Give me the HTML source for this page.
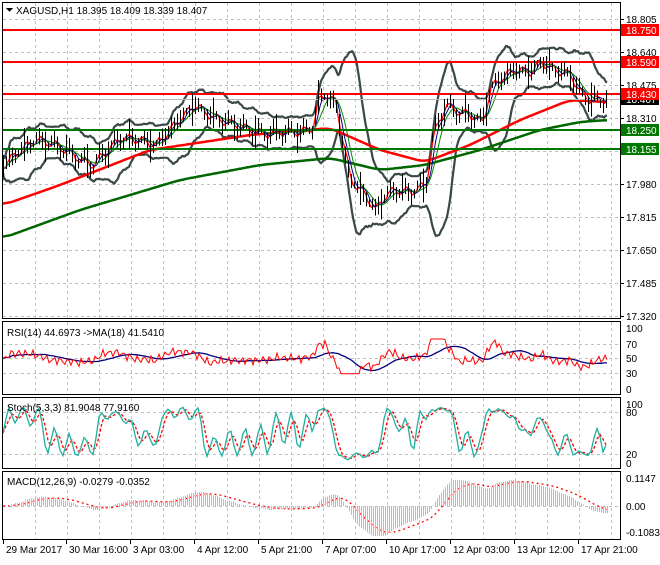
<!DOCTYPE html><html><head><meta charset="utf-8"><style>
body{margin:0;background:#fff;width:660px;height:560px;overflow:hidden;font-family:"Liberation Sans",sans-serif}
svg text{font-family:"Liberation Sans",sans-serif;font-size:10px}
</style></head><body>
<svg id="s" width="660" height="560" xmlns="http://www.w3.org/2000/svg" shape-rendering="crispEdges">
<rect width="660" height="560" fill="#fff"/>
<g id="grid" stroke="#c0c0c0" stroke-dasharray="3,3" stroke-width="1"></g>
<g id="main"></g>
<g fill="none" stroke="#000">
<rect x="2.5" y="2.5" width="618" height="316"/>
<rect x="2.5" y="321.5" width="618" height="73"/>
<rect x="2.5" y="397.5" width="618" height="71"/>
<rect x="2.5" y="471.5" width="618" height="68"/>
</g>
<g id="axis" fill="#000"></g>
<text x="16" y="14" font-size="10">XAGUSD,H1  18.395 18.409 18.339 18.407</text>
<path d="M6 8h7l-3.5 4z" fill="#000"/>
<text x="7" y="336">RSI(14) 44.6973  -&gt;MA(18) 41.5410</text>
<text x="7" y="411">Stoch(5,3,3) 81.9048 77.9160</text>
<text x="7" y="485">MACD(12,26,9) -0.0279 -0.0352</text>
</svg>
<script>
var S=document.getElementById('s'),G=document.getElementById('grid'),M=document.getElementById('main'),A=document.getElementById('axis');
function el(p,n,a,t){var e=document.createElementNS('http://www.w3.org/2000/svg',n);for(var k in a)e.setAttribute(k,a[k]);if(t)e.textContent=t;p.appendChild(e);return e;}
for(var x=35;x<620;x+=32)[[3,318],[322,394],[398,468],[472,539]].forEach(function(r){el(G,'line',{x1:x+.5,x2:x+.5,y1:r[0],y2:r[1]})});
for(var y=19;y<318;y+=33)el(G,'line',{x1:3,x2:620,y1:y+.5,y2:y+.5});
[344,358,373].forEach(function(y){el(G,'line',{x1:3,x2:620,y1:y+.5,y2:y+.5})});
[412,454].forEach(function(y){el(G,'line',{x1:3,x2:620,y1:y+.5,y2:y+.5})});
el(G,'line',{x1:3,x2:620,y1:506.5,y2:506.5});
var K=[[3,165],[20,150],[35,140],[50,143],[65,150],[80,160],[92,165],[105,152],[120,138],[140,140],[155,145],[165,135],[180,118],[195,105],[205,113],[220,120],[235,125],[250,130],[265,134],[280,132],[300,132],[312,128],[318,100],[325,95],[335,103],[342,140],[350,180],[362,192],[375,210],[385,195],[395,190],[410,192],[425,185],[433,135],[445,105],[458,112],[470,115],[482,122],[490,88],[505,75],[515,70],[530,72],[540,62],[555,70],[570,75],[580,93],[590,100],[607,99]];
var P=[];for(var x=3;x<=607;x++){for(var i=0;i<K.length-1&&K[i+1][0]<x;i++);var a=K[i],b=K[i+1]||a;var t=b[0]==a[0]?0:(x-a[0])/(b[0]-a[0]);P.push([x,a[1]+(b[1]-a[1])*t+Math.sin(x*1.7)*3+Math.sin(x*.43)*4]);}
function poly(p,pts,c,w,da){var s=pts.map(function(q){return q[0].toFixed(1)+','+q[1].toFixed(1)}).join(' ');var a={points:s,fill:'none',stroke:c,'stroke-width':w};if(da)a['stroke-dasharray']=da;el(p,'polyline',a);}
function sma(arr,n){return arr.map(function(v,i){var s=0,c=0;for(var j=Math.max(0,i-n+1);j<=i;j++){s+=arr[j];c++}return s/c})}
var pv=P.map(function(q){return q[1]});
var mid=sma(pv,26);var up=[],dn=[];
for(var i=0;i<pv.length;i++){var s=0,c=0;for(var j=Math.max(0,i-25);j<=i;j++){s+=(pv[j]-mid[i])*(pv[j]-mid[i]);c++}var d=Math.sqrt(s/c)*2.4+7;up.push([P[i][0],mid[i]-d]);dn.push([P[i][0],mid[i]+d]);}
var gs=document.createElementNS('http://www.w3.org/2000/svg','g');gs.setAttribute('shape-rendering','auto');M.appendChild(gs);
poly(gs,up,'#3a4848',2.2);poly(gs,dn,'#3a4848',2.2);
var R=[[3,205],[60,185],[150,150],[250,135],[330,128],[380,150],[425,162],[470,145],[520,120],[570,100],[607,102]];
var Gm=[[3,238],[80,210],[180,180],[260,165],[330,158],[380,170],[425,165],[480,150],[540,130],[580,122],[607,120]];
function interp(K){var o=[];for(var x=3;x<=607;x+=2){for(var i=0;i<K.length-1&&K[i+1][0]<x;i++);var a=K[i],b=K[i+1]||a;var t=b[0]==a[0]?0:(x-a[0])/(b[0]-a[0]);o.push([x,a[1]+(b[1]-a[1])*t]);}return o;}
function smooth(o){return o.map(function(q,i){var s=0,c=0;for(var j=Math.max(0,i-4);j<=Math.min(o.length-1,i+4);j++){s+=o[j][1];c++}return [q[0],s/c]})}
poly(gs,smooth(interp(R)),'#f00',2.5);poly(gs,smooth(interp(Gm)),'#060',2.5);
[[30,'#f00'],[62,'#f00'],[94,'#f00'],[130,'#070'],[149,'#070']].forEach(function(l){el(M,'line',{x1:3,x2:620,y1:l[0],y2:l[0],stroke:l[1],'stroke-width':2})});
el(M,'line',{x1:3,x2:620,y1:99.5,y2:99.5,stroke:'#bbb'});
for(var i=0;i<pv.length;i+=3){var v=pv[i],r=3+Math.abs(Math.sin(i*2.3))*6+(i%7==0?8:0);el(M,'line',{x1:P[i][0]+.5,x2:P[i][0]+.5,y1:v-r,y2:v+r,stroke:'#000'});}
function ms(n){var m=sma(pv,n);return P.map(function(q,i){return [q[0],m[i]]})}
poly(gs,ms(3),'#f00',1.3);poly(gs,ms(8),'#008',1);poly(gs,ms(14),'#080',1);
var rsi=[],rr=[];for(var i=0;i<pv.length;i+=2){var d=(pv[Math.max(0,i-14)]-pv[i]);var v=50+d*0.7+Math.sin(i*.9)*5;v=Math.max(25,Math.min(82,v));rsi.push([P[i][0],389-v*0.61]);rr.push(v);}
var rm=sma(rr,18);poly(gs,rm.map(function(v,i){return [rsi[i][0],389-v*0.61]}),'#000080',1.3);poly(gs,rsi,'#f00',1);
var st=[];for(var i=0;i<pv.length;i+=3){var lo=1e9,hi=-1e9;for(var j=Math.max(0,i-15);j<=i;j++){lo=Math.min(lo,pv[j]);hi=Math.max(hi,pv[j])}var v=hi-lo<1?50:(hi-pv[i])/(hi-lo)*100;st.push(v);}
st=sma(st,2).map(function(v,k){return 8+v*0.84+Math.sin(k*1.3)*4});
var stx=st.map(function(v,k){return [P[k*3][0],462-v*0.58]});var ss=sma(st,3);
poly(gs,ss.map(function(v,k){return [stx[k][0],462-v*0.58]}),'#f00',1.3,'3,2');poly(gs,stx,'#20b0a0',1.3);
function ema(a,n){var k=2/(n+1),o=[a[0]];for(var i=1;i<a.length;i++)o.push(a[i]*k+o[i-1]*(1-k));return o}
var neg=pv.map(function(v){return -v});var e1=ema(neg,36),e2=ema(neg,78);var mc=e1.map(function(v,i){return v-e2[i]});var sg=ema(mc,27);
for(var i=0;i<mc.length;i+=2){var y=506-mc[i]*1.4;y=Math.max(476,Math.min(536,y));el(M,'line',{x1:P[i][0]+.5,x2:P[i][0]+.5,y1:506,y2:y,stroke:'#bbb'});}
poly(gs,sg.filter(function(v,i){return i%2==0}).map(function(v,k){return [P[k*2][0],Math.max(476,Math.min(536,506-v*1.4))]}),'#f00',1.3,'2,3');
var lab=['18.805','18.640','18.475','18.310','18.145','17.980','17.815','17.650','17.485','17.320'];
lab.forEach(function(t,i){var y=19+i*33;el(A,'line',{x1:620,x2:624,y1:y+.5,y2:y+.5,stroke:'#000'});el(A,'text',{x:626,y:y+4},t)});
[['100',328],['70',344],['50',358],['30',373],['0',389]].forEach(function(q){el(A,'text',{x:626,y:q[1]+4},q[0])});
[['100',404],['80',412],['20',454],['0',463]].forEach(function(q){el(A,'text',{x:626,y:q[1]+4},q[0])});
[['0.1147',478],['0.00',506],['-0.1083',532]].forEach(function(q){el(A,'text',{x:626,y:q[1]+4},q[0])});
el(A,'rect',{x:621,y:94,width:38,height:11,fill:'#000'});el(A,'text',{x:626,y:103,fill:'#fff'},'18.407');
[[30,'#f00','18.750'],[62,'#f00','18.590'],[94,'#f00','18.430'],[130,'#070','18.250'],[149,'#070','18.155']].forEach(function(q){el(A,'rect',{x:621,y:q[0]-6,width:38,height:12,fill:q[1]});el(A,'text',{x:626,y:q[0]+4,fill:'#fff'},q[2])});
var tl=[['29 Mar 2017',3],['30 Mar 16:00',66],['3 Apr 03:00',130],['4 Apr 12:00',194],['5 Apr 21:00',258],['7 Apr 07:00',322],['10 Apr 17:00',386],['12 Apr 03:00',450],['13 Apr 12:00',514],['17 Apr 21:00',578]];
tl.forEach(function(q){el(A,'line',{x1:q[1]+.5,x2:q[1]+.5,y1:540,y2:544,stroke:'#000'});el(A,'text',{x:q[1]+3,y:553},q[0])});
</script>
</body></html>
